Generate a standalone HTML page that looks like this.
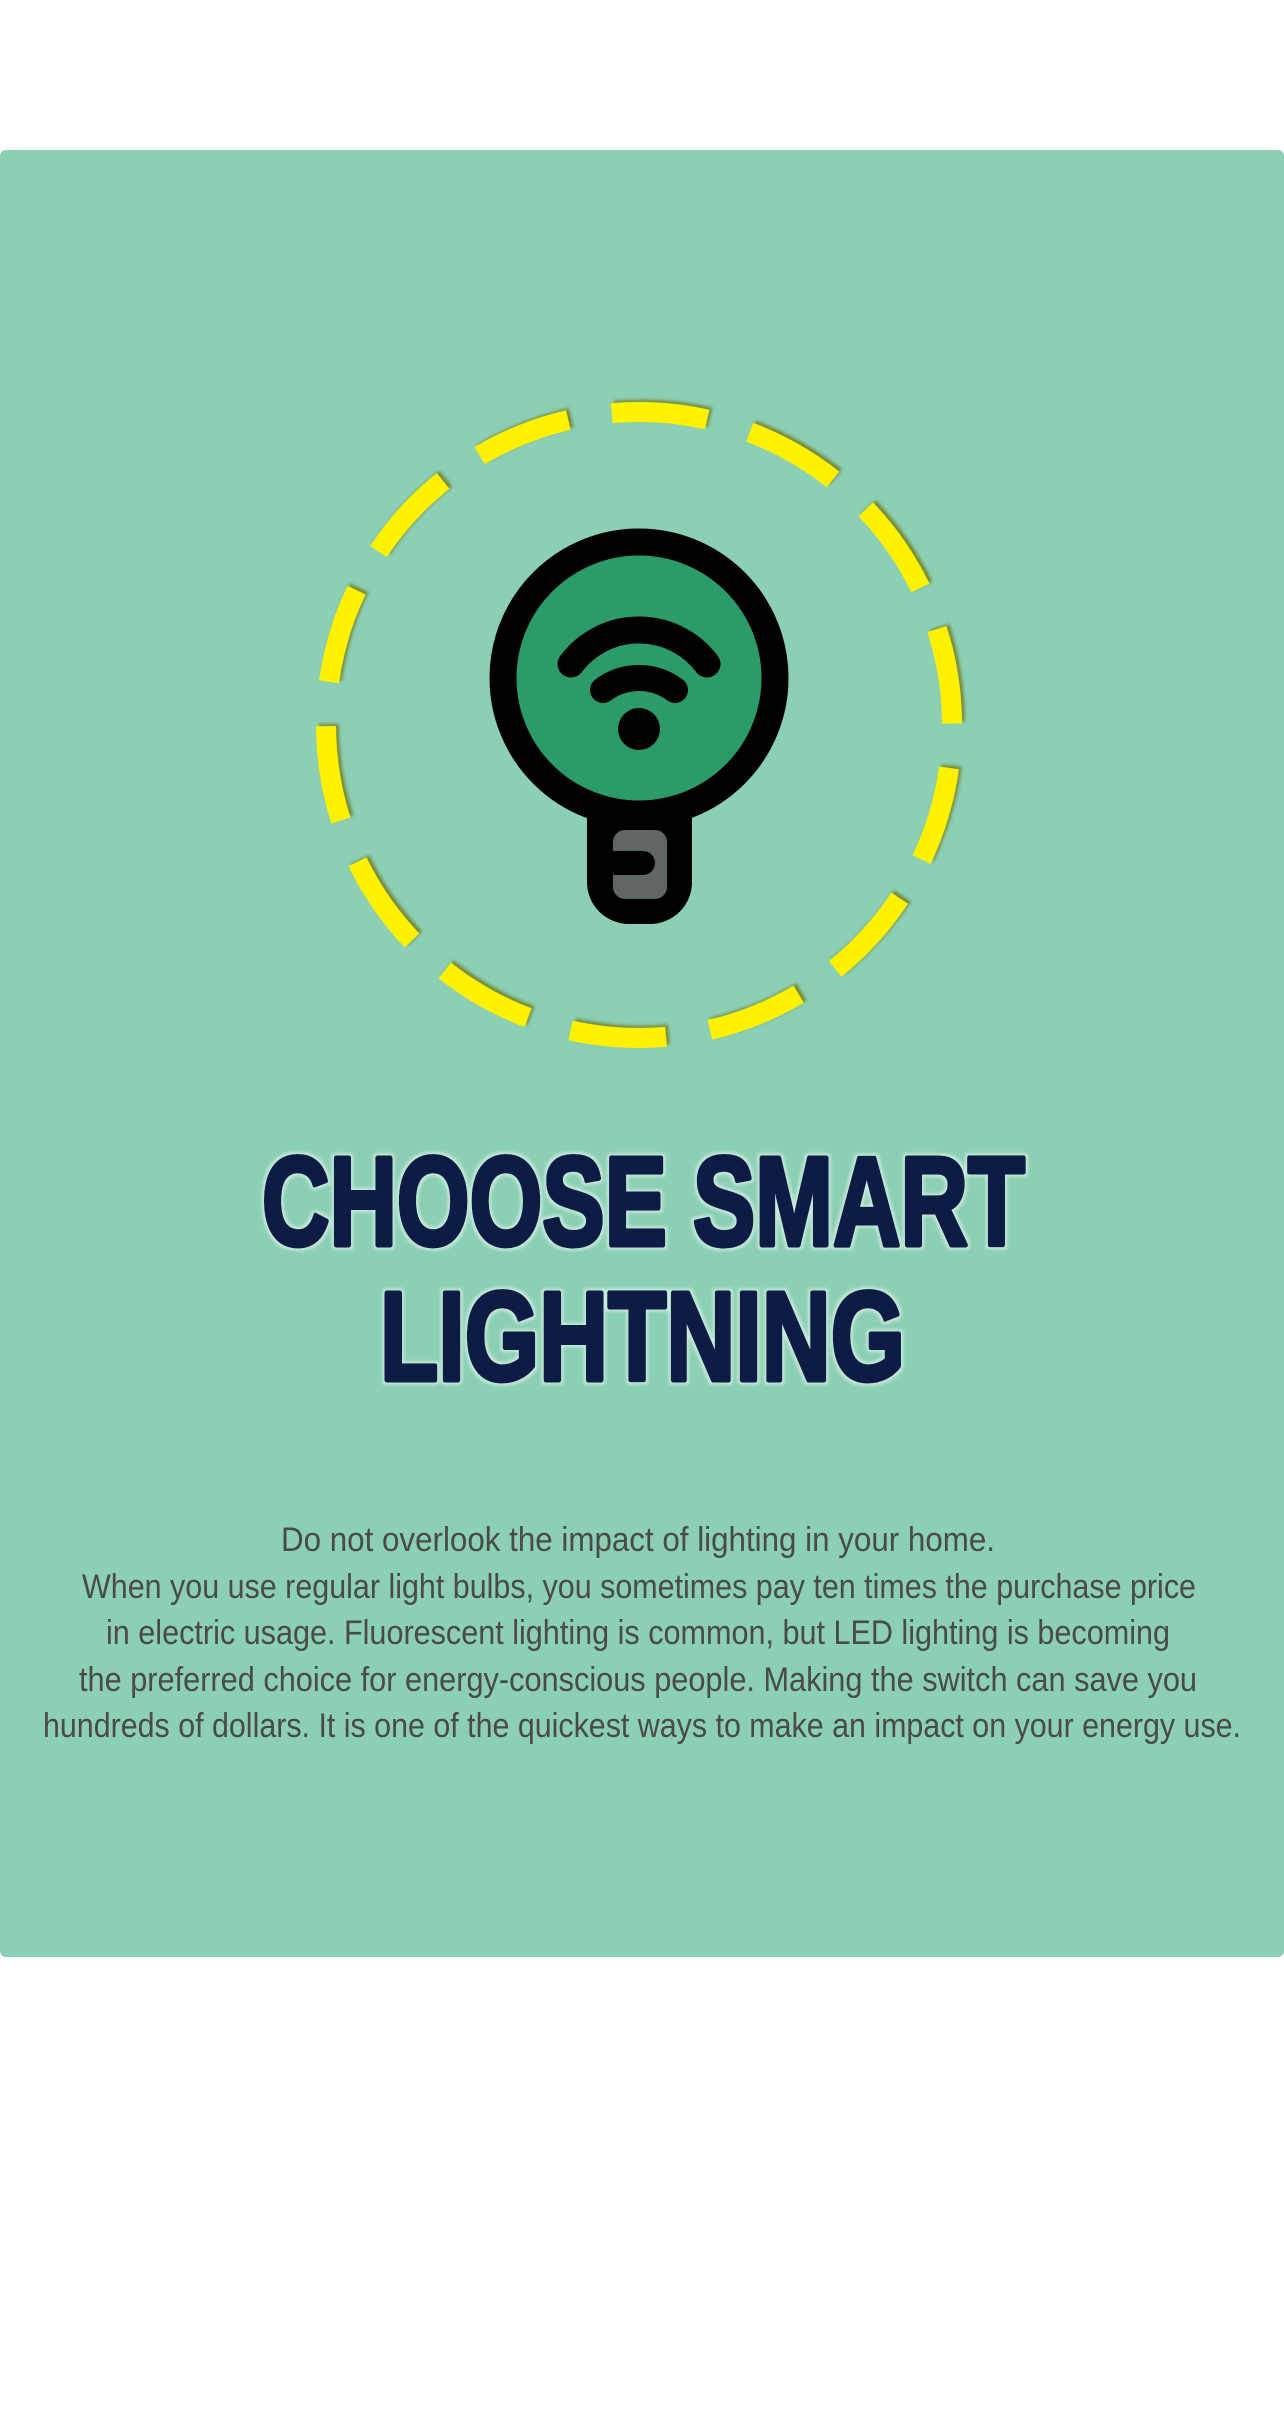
<!DOCTYPE html>
<html><head><meta charset="utf-8">
<style>
html,body{margin:0;padding:0;background:#fff;}
body{width:1284px;height:2419px;position:relative;overflow:hidden;}
svg{position:absolute;left:0;top:0;}
</style></head>
<body>
<svg width="1284" height="2419" viewBox="0 0 1284 2419" xmlns="http://www.w3.org/2000/svg">
<defs>
<filter id="sh" x="-10%" y="-10%" width="120%" height="120%">
<feDropShadow dx="2" dy="3" stdDeviation="1.5" flood-color="#6b6b00" flood-opacity="0.7"/>
</filter>
<filter id="tg" x="-5%" y="-5%" width="110%" height="110%">
<feMorphology operator="dilate" radius="2" in="SourceAlpha" result="d"/>
<feFlood flood-color="#c8eadc"/><feComposite in2="d" operator="in" result="o"/>
<feGaussianBlur in="o" stdDeviation="1.5" result="ob"/>
<feMerge><feMergeNode in="ob"/><feMergeNode in="SourceGraphic"/></feMerge>
</filter>
</defs>
<rect x="0" y="150" width="1284" height="1807" rx="6" fill="#8bcfb4"/>
<circle cx="639" cy="725" r="313" fill="none" stroke="#fff200" stroke-width="20" stroke-dasharray="96 44.5" transform="rotate(-95 639 725)" filter="url(#sh)"/>
<rect x="587" y="770" width="105" height="154" rx="42" fill="#000"/>
<path d="M560 770 Q600 800 600 830 L679 830 Q679 800 719 770 Z" fill="#000"/>
<circle cx="639" cy="678" r="136" fill="#2b9b6a" stroke="#000" stroke-width="27"/>
<rect x="598" y="806" width="83" height="24" fill="#000"/>
<rect x="613" y="830" width="54" height="69" rx="12" fill="#5f6663"/>
<path d="M613 851 L643 851 A12 12 0 0 1 643 875 L613 875 Z" fill="#000"/>
<path d="M571 664 A85 85 0 0 1 707 664" fill="none" stroke="#000" stroke-width="27" stroke-linecap="round"/>
<path d="M603 690 A60 60 0 0 1 675 690" fill="none" stroke="#000" stroke-width="26" stroke-linecap="round"/>
<circle cx="639" cy="729" r="21" fill="#000"/>
<g filter="url(#tg)" font-family="Liberation Sans, Arial, sans-serif" font-weight="bold" font-size="126" fill="#0d1a45" stroke="#0d1a45" stroke-width="5" stroke-linejoin="round">
<text x="262" y="1245" textLength="763" lengthAdjust="spacingAndGlyphs">CHOOSE SMART</text>
<text x="380" y="1380" textLength="525" lengthAdjust="spacingAndGlyphs">LIGHTNING</text>
</g>
<g font-family="Liberation Sans Narrow, Liberation Sans, Arial, sans-serif" font-size="34" fill="#4a4a4a">
<text x="281" y="1551" textLength="714" lengthAdjust="spacingAndGlyphs">Do not overlook the impact of lighting in your home.</text>
<text x="82" y="1598" textLength="1114" lengthAdjust="spacingAndGlyphs">When you use regular light bulbs, you sometimes pay ten times the purchase price</text>
<text x="106" y="1644" textLength="1064" lengthAdjust="spacingAndGlyphs">in electric usage. Fluorescent lighting is common, but LED lighting is becoming</text>
<text x="79" y="1691" textLength="1118" lengthAdjust="spacingAndGlyphs">the preferred choice for energy-conscious people.  Making the switch can save you</text>
<text x="43" y="1737" textLength="1198" lengthAdjust="spacingAndGlyphs">hundreds of dollars. It is one of the quickest ways to make an impact on your energy use.</text>
</g>
</svg>
</body></html>
